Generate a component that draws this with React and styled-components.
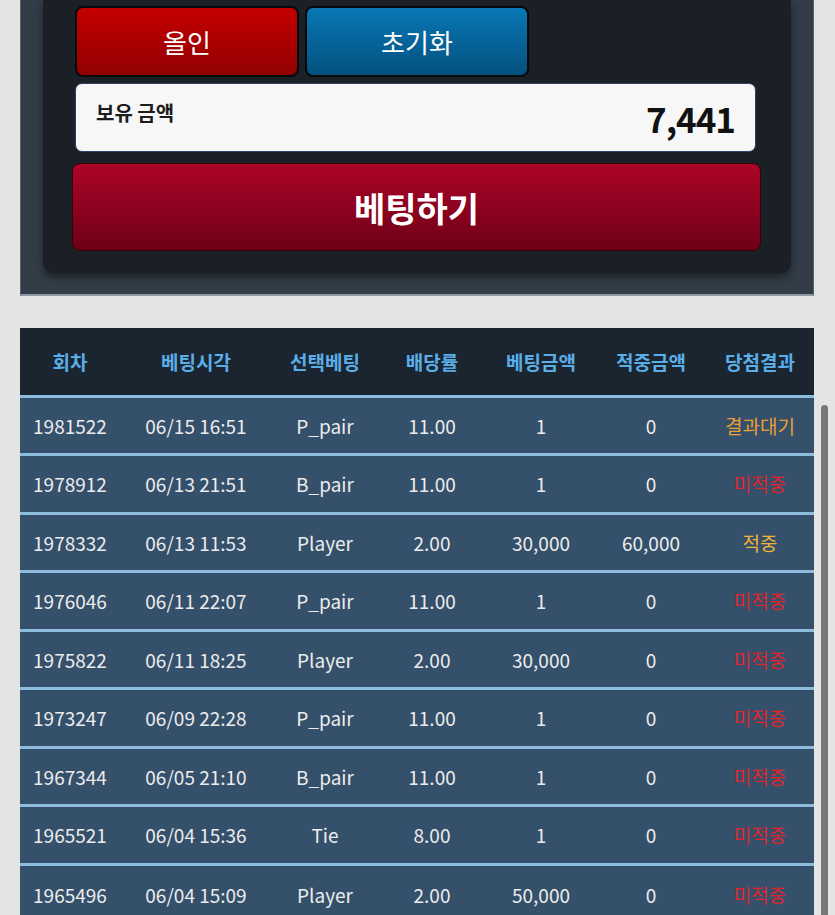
import React from "react";
import styled, { createGlobalStyle } from "styled-components";

const GlobalStyle = createGlobalStyle`
  html, body {
    margin: 0;
    padding: 0;
    overflow: hidden;
    background: #e4e4e4;
    font-family: "Noto Sans CJK KR", "Noto Sans", sans-serif;
  }
`;

const Page = styled.div`
  width: 835px;
  height: 915px;
  position: relative;
  overflow: hidden;
`;

const BetPanel = styled.div`
  margin: 0 21px 0 20px;
  padding: 0 22px 21px;
  background: #333d47;
  border-left: 1px solid #56616c;
  border-right: 1px solid #56616c;
  border-bottom: 2px solid #8d99a4;
`;

const Card = styled.div`
  background: #1b2027;
  border-radius: 0 0 10px 10px;
  box-shadow: 0 4px 8px rgba(0, 0, 0, 0.45);
  padding: 6px 30px 22px 29px;
  display: flex;
  flex-direction: column;
`;

const ButtonRow = styled.div`
  display: flex;
  gap: 6px;
  padding-left: 3px;
`;

const SmallButton = styled.button`
  width: 224px;
  height: 71px;
  border: 2px solid #07090b;
  border-radius: 8px;
  color: #fff;
  font-family: inherit;
  font-size: 26px;
  font-weight: 400;
  background: ${({ $tone }) =>
    $tone === "red"
      ? "linear-gradient(#c40000, #920000)"
      : "linear-gradient(#0878b4, #04507f)"};
`;

const BalanceBox = styled.div`
  margin: 6px 5px 0 3px;
  height: 69px;
  background: #f7f7f7;
  border: 1px solid #2d3f6a;
  border-radius: 7px;
  display: flex;
  align-items: center;
  justify-content: space-between;
  padding: 0 20px 0 20px;
  box-sizing: border-box;
`;

const BalanceLabel = styled.span`
  font-size: 20px;
  font-weight: 700;
  color: #1d1d1d;
  margin-bottom: 10px;
`;

const BalanceValue = styled.span`
  font-size: 35px;
  font-weight: 700;
  color: #111;
  letter-spacing: -1px;
`;

const BetButton = styled.button`
  margin-top: 11px;
  height: 88px;
  border: 1px solid #3a0008;
  border-radius: 8px;
  background: linear-gradient(#ac0428, #6e0016);
  color: #fff;
  font-family: inherit;
  font-size: 34px;
  font-weight: 700;
`;

const HistorySection = styled.div`
  margin: 32px 21px 0 20px;
`;

const Table = styled.table`
  width: 100%;
  border-collapse: collapse;
  table-layout: fixed;
`;

const HeadRow = styled.tr`
  background: #1a2530;
  height: 68px;
`;

const HeadCell = styled.th`
  color: #5aaee8;
  font-size: 19px;
  font-weight: 700;
  text-align: center;
  padding: 0;
`;

const BodyRow = styled.tr`
  background: #35506a;
  height: 58.5px;
  border-top: 3px solid #8cbcde;
`;

const Cell = styled.td`
  color: ${({ $color }) => $color || "#ececec"};
  font-size: 19px;
  font-weight: 400;
  text-align: center;
  padding: 0;
  white-space: nowrap;
`;

const ScrollThumb = styled.div`
  position: absolute;
  left: 821px;
  top: 405px;
  width: 7px;
  height: 520px;
  border-radius: 4px;
  background: #777;
`;

const columns = [
  { title: "회차", width: 100 },
  { title: "베팅시각", width: 152 },
  { title: "선택베팅", width: 106 },
  { title: "배당률", width: 108 },
  { title: "베팅금액", width: 110 },
  { title: "적중금액", width: 110 },
  { title: "당첨결과", width: 108 },
];

const resultColors = {
  결과대기: "#eaa033",
  미적중: "#e0242b",
  적중: "#f0b23a",
};

const history = [
  ["1981522", "06/15 16:51", "P_pair", "11.00", "1", "0", "결과대기"],
  ["1978912", "06/13 21:51", "B_pair", "11.00", "1", "0", "미적중"],
  ["1978332", "06/13 11:53", "Player", "2.00", "30,000", "60,000", "적중"],
  ["1976046", "06/11 22:07", "P_pair", "11.00", "1", "0", "미적중"],
  ["1975822", "06/11 18:25", "Player", "2.00", "30,000", "0", "미적중"],
  ["1973247", "06/09 22:28", "P_pair", "11.00", "1", "0", "미적중"],
  ["1967344", "06/05 21:10", "B_pair", "11.00", "1", "0", "미적중"],
  ["1965521", "06/04 15:36", "Tie", "8.00", "1", "0", "미적중"],
  ["1965496", "06/04 15:09", "Player", "2.00", "50,000", "0", "미적중"],
];

const App = () => {
  return (
    <Page>
      <GlobalStyle />
      <BetPanel>
        <Card>
          <ButtonRow>
            <SmallButton $tone="red">올인</SmallButton>
            <SmallButton $tone="blue">초기화</SmallButton>
          </ButtonRow>
          <BalanceBox>
            <BalanceLabel>보유 금액</BalanceLabel>
            <BalanceValue>7,441</BalanceValue>
          </BalanceBox>
          <BetButton>베팅하기</BetButton>
        </Card>
      </BetPanel>
      <HistorySection>
        <Table>
          <colgroup>
            {columns.map((col) => (
              <col key={col.title} style={{ width: col.width }} />
            ))}
          </colgroup>
          <thead>
            <HeadRow>
              {columns.map((col) => (
                <HeadCell key={col.title}>{col.title}</HeadCell>
              ))}
            </HeadRow>
          </thead>
          <tbody>
            {history.map((row) => (
              <BodyRow key={row[0]}>
                {row.map((value, i) => (
                  <Cell
                    key={i}
                    $color={i === 6 ? resultColors[value] : undefined}
                  >
                    {value}
                  </Cell>
                ))}
              </BodyRow>
            ))}
          </tbody>
        </Table>
      </HistorySection>
      <ScrollThumb />
    </Page>
  );
};

export default App;
